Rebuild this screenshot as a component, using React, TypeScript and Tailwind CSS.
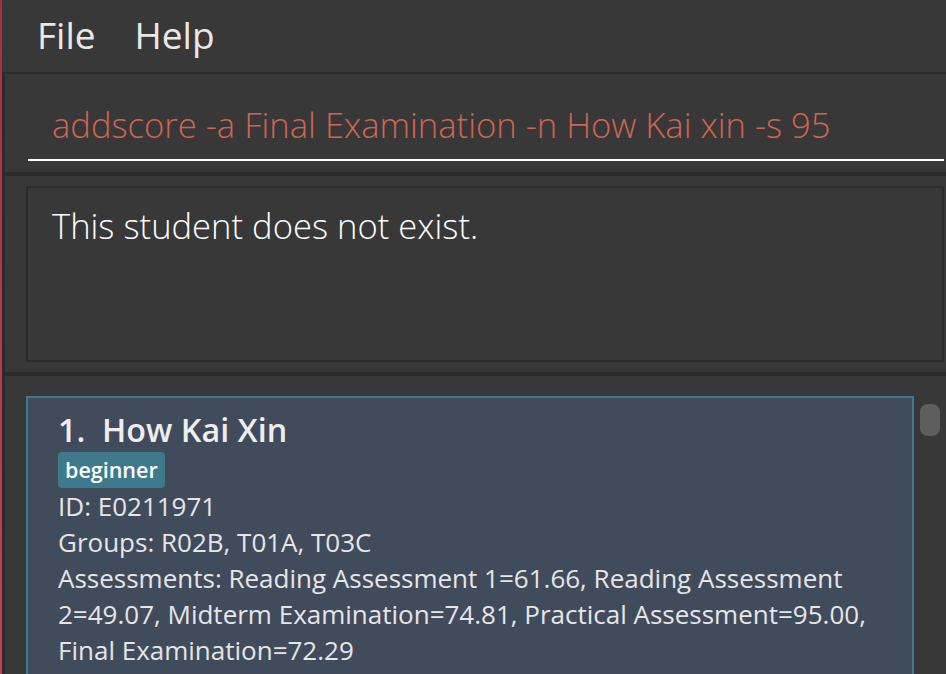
import React from "react";

const font = { fontFamily: '"Open Sans", "Liberation Sans", sans-serif' };

export default function App() {
  return (
    <div
      className="w-[946px] h-[674px] overflow-hidden flex bg-[#383838]"
      style={font}
    >
      {/* left window edge */}
      <div className="w-[2px] h-full bg-gradient-to-b from-[#a8303f] to-[#c9404e]" />

      <div className="flex-1 flex flex-col min-w-0">
        {/* Menu bar */}
        <div className="h-[72px] flex items-center pl-[35px] pb-[3px] gap-[39px] text-[37px] text-[#e8e8e8] shrink-0">
          <span>File</span>
          <span>Help</span>
        </div>

        {/* Body */}
        <div className="flex-1 flex flex-col border-l-[3px] border-t-2 border-[#2b2b2b] min-h-0">
          {/* Command box */}
          <div className="h-[98px] shrink-0 pt-[14px] pl-[23px] pr-[2px]">
            <div className="h-[73px] border-b-2 border-white flex items-center pl-[24px] pt-[2px]">
              <span className="text-[34.6px] font-light text-[#d2654f] whitespace-nowrap">
                addscore -a Final Examination -n How Kai xin -s 95
              </span>
            </div>
          </div>

          <div className="h-[4px] shrink-0 bg-[#2b2b2b]" />

          {/* Result display */}
          <div className="h-[196px] shrink-0 pt-[10px] pb-[10px] pl-[21px] pr-[2px]">
            <div className="h-full border-2 border-[#2b2b2b] pl-[24px] pt-[14px]">
              <p className="text-[34.6px] font-light text-white leading-[48px]">
                This student does not exist.
              </p>
            </div>
          </div>

          <div className="h-[4px] shrink-0 bg-[#2b2b2b]" />

          {/* Student list */}
          <div className="flex-1 flex min-h-0 overflow-hidden pt-[20px]">
            <div className="flex-1 ml-[21px] self-start bg-[#404b5c] border-2 border-[#3d7a8f] pl-[30px] pr-[30px] pt-[13px] pb-[20px]">
              <h2 className="text-[32.3px] font-semibold text-[#eeeeee] leading-[36px] whitespace-pre mb-[5px]">
                {"1.  How Kai Xin"}
              </h2>
              <div className="flex">
                <span className="h-[36px] flex items-center px-[7px] rounded-[4px] bg-[#3e7a8c] text-[21.5px] font-semibold text-white">
                  beginner
                </span>
              </div>
              <div className="text-[26px] leading-[36px] text-[#e6e6e6]">
                <p>ID: E0211971</p>
                <p>Groups: R02B, T01A, T03C</p>
                <p>
                  Assessments: Reading Assessment 1=61.66, Reading Assessment
                  2=49.07, Midterm Examination=74.81, Practical Assessment=95.00,
                  Final Examination=72.29
                </p>
              </div>
            </div>
            <div className="w-[32px] shrink-0 pl-[6px] pt-[8px]">
              <div className="w-[20px] h-[32px] rounded-[8px] bg-[#5e5e5e]" />
            </div>
          </div>
        </div>
      </div>
    </div>
  );
}
